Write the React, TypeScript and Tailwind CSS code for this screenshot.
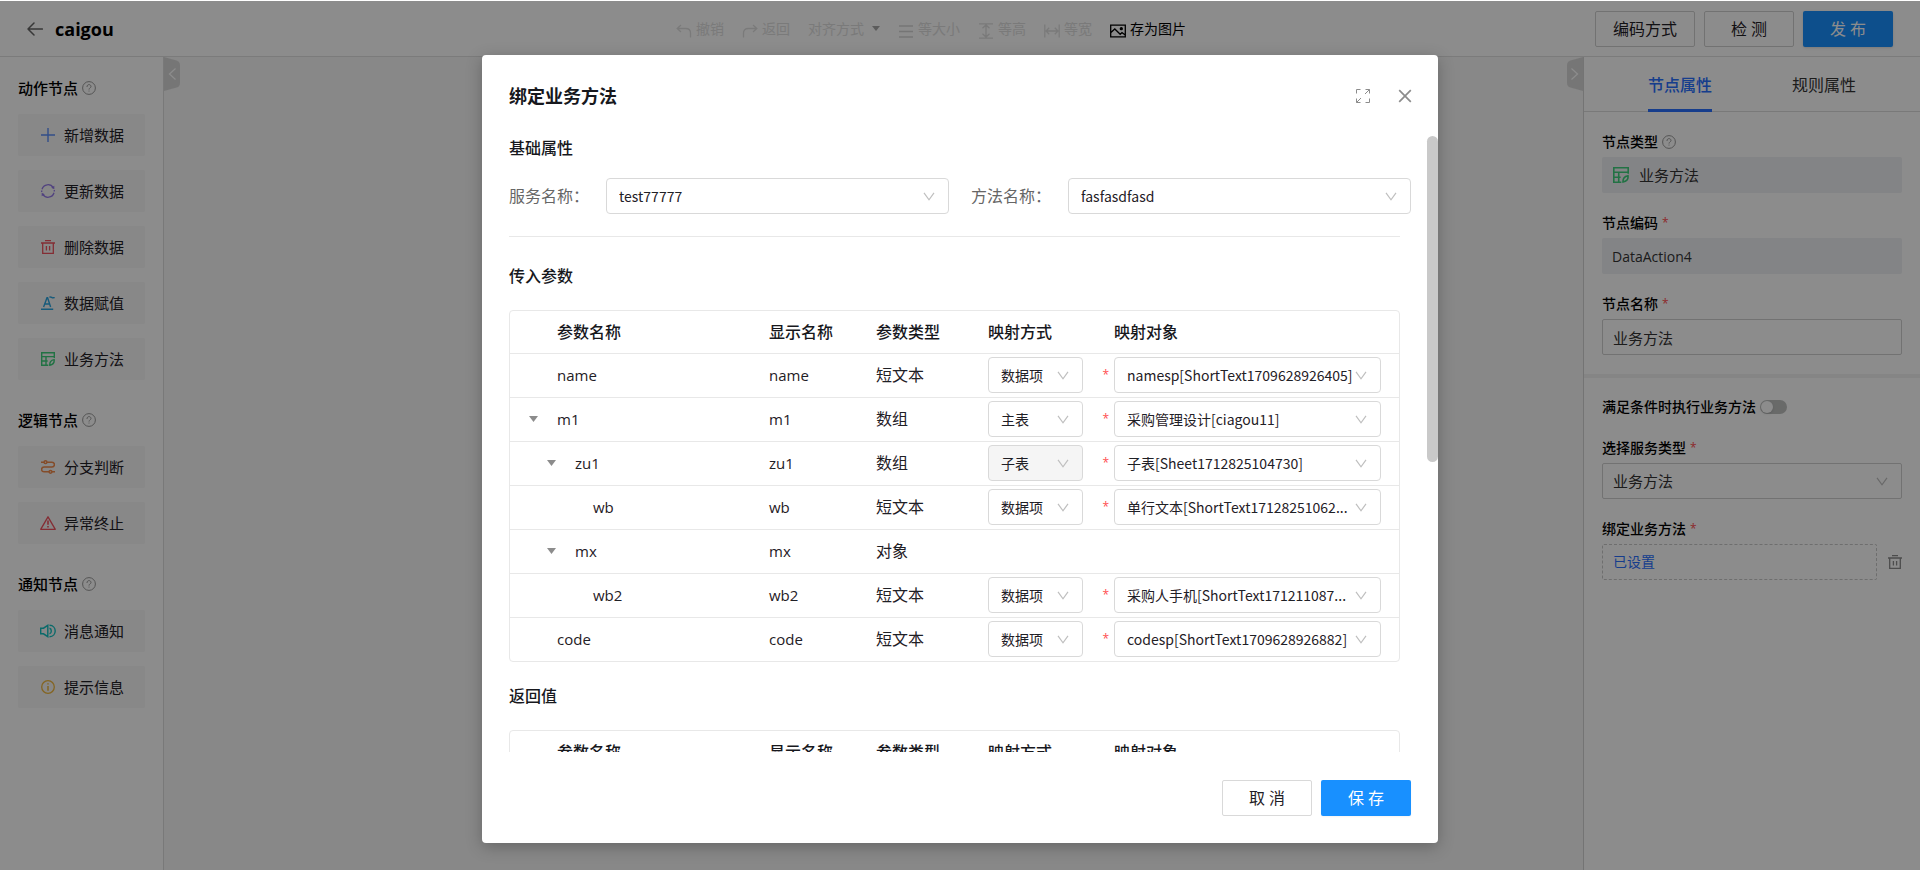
import { useId, useState, type ReactNode } from "react";

type IconProps = { className?: string };

function BackIcon({ className }: IconProps) {
  return (
    <svg viewBox="0 0 16 14" className={className} fill="none" stroke="currentColor" strokeWidth="1.5" strokeLinecap="round" strokeLinejoin="round">
      <path d="M7 1 1 7l6 6M1 7h14.4" />
    </svg>
  );
}

function HelpIcon({ className }: IconProps) {
  return (
    <svg viewBox="0 0 14 14" className={className} fill="none" stroke="currentColor">
      <circle cx="7" cy="7" r="6.4" />
      <path d="M5 5.6c0-1.200.9-2 2-2s2 .8 2 1.900c0 1.300-2 1.500-2 2.700" strokeLinecap="round" />
      <path d="M7 9.600v.9" />
    </svg>
  );
}

function PlusIcon() {
  return (
    <svg viewBox="0 0 14 14" className="size-3.5 text-[#5b8ff9]" stroke="currentColor" strokeWidth="1.4">
      <path d="M7 0v14M0 7h14" />
    </svg>
  );
}

function RefreshIcon() {
  return (
    <svg viewBox="0 0 14 14" className="size-3.5 text-[#9479e8]" fill="none" stroke="currentColor" strokeWidth="1.3">
      <path d="M1 5.200A6.200 6.200 0 0 1 12.300 3.800M13 8.800A6.200 6.200 0 0 1 1.700 10.200" />
      <path d="M13.300 1.800v3.400l-3-1.400zM.7 12.200V8.800l3 1.400z" fill="currentColor" stroke="none" />
      <path d="M13.300 6v1.400M.7 8V6.600" />
    </svg>
  );
}

function TrashIcon({ className }: IconProps) {
  return (
    <svg viewBox="0 0 14 14" className={className} fill="none" stroke="currentColor" strokeWidth="1.3">
      <path d="M4 .7h6M0 3h14M1.700 3v10.300h10.600V3M5.400 6v4.400M8.600 6v4.400" />
    </svg>
  );
}

function AssignIcon() {
  return (
    <svg viewBox="0 0 14 14" className="size-3.5 text-[#2aa5e0]" fill="none" stroke="currentColor" strokeWidth="1.400">
      <path d="M2.600 11 6 1.800h.6L9.600 11M3.800 8h4.800M0 13.300h12.200" />
      <path d="M8.400 1.400c1.300-1.500 2.600.8 3.600.4.700-.200 1-.4 1.700 0" />
    </svg>
  );
}

function MethodIcon({ className }: IconProps) {
  return (
    <svg viewBox="0 0 14 14" className={className} fill="none" stroke="currentColor" strokeWidth="1.400">
      <path d="M13.300 6V.7H.7v12.600h6.600M.7 4.600h12.600M.7 9h6M5 4.600v8.700" />
      <path d="M8.800 13.200c-.3-2.500.9-5.200 4.300-5.600.4 2.700-.9 4.900-4.300 5.600z" />
    </svg>
  );
}

function BranchIcon() {
  return (
    <svg viewBox="0 0 14 14" className="size-3.5 text-[#f08a4b]" fill="none" stroke="currentColor" strokeWidth="1.500">
      <path d="M0 2.200h3M6 2.200h5a2.400 2.400 0 0 1 0 4.800H3a2.400 2.400 0 0 0 0 4.800h5M11 11.800h3" />
      <circle cx="4.500" cy="2.200" r="1.400" />
      <circle cx="9.500" cy="11.800" r="1.400" />
    </svg>
  );
}

function WarnIcon() {
  return (
    <svg viewBox="0 0 16 14" className="h-3.5 w-4 text-[#f0525f]" fill="none" stroke="currentColor" strokeWidth="1.300" strokeLinejoin="round">
      <path d="M8 .8 15.300 13.300H.7z" />
      <path d="M8 4.500v4.300M8 10v1.600" strokeWidth="1.600" />
    </svg>
  );
}

function SpeakerIcon() {
  return (
    <svg viewBox="0 0 16 14" className="h-3.5 w-4 text-[#13c2c2]" fill="none" stroke="currentColor" strokeWidth="1.400">
      <path d="M.7 4.200h2.800L7.800 1.300v11.400L3.500 9.800H.7z" />
      <path d="M9.500 4.300c2.400.5 2.400 4.900 0 5.400M9.500 1.300c7.600.2 7.600 11.200 0 11.400" />
    </svg>
  );
}

function InfoIcon() {
  return (
    <svg viewBox="0 0 14 14" className="size-3.5 text-[#f0b73d]" fill="none" stroke="currentColor" strokeWidth="1.300">
      <circle cx="7" cy="7" r="6.300" />
      <path d="M7 3.200v1.400M7 6v4.800" strokeWidth="1.500" />
    </svg>
  );
}

function ChevronDown({ className }: IconProps) {
  return (
    <svg viewBox="0 0 12 9" className={`pointer-events-none absolute h-[9px] w-3 text-[#bfbfbf] ${className ?? ""}`} fill="none" stroke="currentColor" strokeWidth="1.200">
      <path d="M1 .8 6 7.800 11 .8" />
    </svg>
  );
}

function Required() {
  return <span className="text-xs text-[#ff4d4f]">*</span>;
}

type SelectProps = {
  id?: string;
  label?: string;
  value: string;
  disabled?: boolean;
  className?: string;
};

function Select({ id, label, value, disabled, className }: SelectProps) {
  return (
    <div className={`relative flex items-center ${className ?? ""}`}>
      <select
        id={id}
        aria-label={label}
        disabled={disabled}
        defaultValue={value}
        className="h-9 w-full appearance-none overflow-hidden rounded border border-[#d9d9d9] bg-white pr-5 pl-3 font-['Noto_Sans_CJK_SC',sans-serif] text-sm text-ellipsis whitespace-nowrap text-[#1f2026] disabled:bg-[#f5f5f5] disabled:opacity-100"
      >
        <option>{value}</option>
      </select>
      <ChevronDown className="right-3.5" />
    </div>
  );
}

const NODE_GROUPS: { title: string; nodes: { name: string; icon: ReactNode }[] }[] = [
  {
    title: "动作节点",
    nodes: [
      { name: "新增数据", icon: <PlusIcon /> },
      { name: "更新数据", icon: <RefreshIcon /> },
      { name: "删除数据", icon: <TrashIcon className="size-3.5 text-[#f0525f]" /> },
      { name: "数据赋值", icon: <AssignIcon /> },
      { name: "业务方法", icon: <MethodIcon className="size-3.5 text-[#3ecf7c]" /> },
    ],
  },
  {
    title: "逻辑节点",
    nodes: [
      { name: "分支判断", icon: <BranchIcon /> },
      { name: "异常终止", icon: <WarnIcon /> },
    ],
  },
  {
    title: "通知节点",
    nodes: [
      { name: "消息通知", icon: <SpeakerIcon /> },
      { name: "提示信息", icon: <InfoIcon /> },
    ],
  },
];

function ToolIcon({ d, className }: { d: string; className?: string }) {
  return (
    <svg viewBox="0 0 16 16" className={`mt-1 size-4 ${className ?? ""}`} fill="none" stroke="currentColor" strokeWidth="1.300">
      <path d={d} />
    </svg>
  );
}

function Header() {
  return (
    <header className="flex h-14 shrink-0 items-center border-b border-[#e0e0e0] bg-white px-[27px]">
      <div className="flex flex-1 items-center gap-3">
        <a href="#back" aria-label="返回" className="text-[#666]">
          <BackIcon className="h-3.5 w-4" />
        </a>
        <h1 className="text-lg leading-6 font-bold text-black">caigou</h1>
      </div>
      <div className="mr-[58px] flex items-center gap-[18px] text-sm text-[#dedede]">
        <button type="button" disabled className="flex items-center gap-1">
          <ToolIcon d="M5 2 1.200 5.500 5 9M1.200 5.500h8.600c3 0 4.700 1.700 4.700 4.500v4.500" />
          撤销
        </button>
        <button type="button" disabled className="flex items-center gap-1">
          <ToolIcon d="M11 2l3.800 3.500L11 9M14.800 5.500H6.200c-3 0-4.700 1.700-4.700 4.500v4.500" />
          返回
        </button>
        <button type="button" disabled className="flex items-center gap-2">
          对齐方式
          <svg viewBox="0 0 8 5" className="h-[5px] w-2 fill-[#a8a8a8]">
            <path d="M0 0h8L4 5z" />
          </svg>
        </button>
        <button type="button" disabled className="flex items-center gap-1">
          <ToolIcon className="text-[#d6d6d6]" d="M1 3h14M1 8.500h14M1 14h14" />
          等大小
        </button>
        <button type="button" disabled className="flex items-center gap-1">
          <ToolIcon d="M1 .8h14M1 15.200h14M8 2v12M4.500 5.200 8 2l3.500 3.200M4.500 10.800 8 14l3.500-3.200" />
          等高
        </button>
        <button type="button" disabled className="flex items-center gap-1">
          <ToolIcon d="M.8 1.500v13M15.200 1.500v13M2 8h12M5.200 4.800 2 8l3.200 3.200M10.800 4.800 14 8l-3.200 3.200" />
          等宽
        </button>
        <button type="button" className="flex items-center gap-1 text-black">
          <svg viewBox="0 0 16 16" className="mt-1 size-4" fill="none" stroke="currentColor" strokeWidth="1.300">
            <path d="M.7 2.200h14.600v11.600H.7zM.9 9.500 4.800 6l5.400 5.300 1.800-1.800 3.200 2.500" />
            <circle cx="11.300" cy="5.700" r="1" fill="currentColor" />
          </svg>
          存为图片
        </button>
      </div>
      <div className="flex flex-1 justify-end gap-[9px]">
        <button type="button" className="h-9 rounded-xs border border-[#d0d0d0] bg-white px-[17px] text-base text-[#1f2026]">
          编码方式
        </button>
        <button type="button" className="h-9 w-[90px] rounded-xs border border-[#d0d0d0] bg-white text-base text-[#1f2026]">
          检 测
        </button>
        <button type="button" className="h-9 w-[90px] rounded-xs bg-[#1890ff] text-base text-white shadow-sm">
          发 布
        </button>
      </div>
    </header>
  );
}

function Sidebar() {
  return (
    <aside className="w-[164px] shrink-0 border-r border-[#dcdcdc] bg-white px-[18px] pt-[19px]">
      <div className="flex flex-col gap-7">
        {NODE_GROUPS.map((group) => (
          <section key={group.title}>
            <h2 className="mb-3.5 flex items-center gap-1 text-[15px] leading-6 font-medium text-black">
              {group.title}
              <HelpIcon className="size-3.5 text-[#999]" />
            </h2>
            <ul className="flex flex-col gap-3.5">
              {group.nodes.map((node) => (
                <li key={node.name}>
                  <button
                    type="button"
                    className="flex h-[42px] w-full items-center gap-2 rounded-xs bg-[#f7f7f7] pl-[22px] text-[15px] text-[#1f2026]"
                  >
                    <span className="flex w-4 justify-center">{node.icon}</span>
                    {node.name}
                  </button>
                </li>
              ))}
            </ul>
          </section>
        ))}
      </div>
    </aside>
  );
}

function CollapseHandle({ side }: { side: "left" | "right" }) {
  return (
    <button type="button" aria-label={side === "left" ? "收起左侧" : "收起右侧"} className="h-[34px] w-4">
      <svg viewBox="0 0 16 34" className={side === "left" ? "size-full" : "size-full -scale-x-100"}>
        <path d="M0 0l12.500 3.400Q16 4.500 16 8v18q0 3.500-3.500 4.600L0 34z" fill="#d8d8d8" />
        <path d="M11.500 11.500 5.500 17l6 5.500" fill="none" stroke="#fff" strokeWidth="1.200" />
      </svg>
    </button>
  );
}

function FieldLabel({ id, children }: { id?: string; children: ReactNode }) {
  return (
    <label htmlFor={id} className="mb-1 flex items-center gap-1 text-sm leading-[22px] font-medium text-black">
      {children}
    </label>
  );
}

function PropertyPanel() {
  const codeId = useId();
  const nameId = useId();
  const serviceId = useId();
  const switchId = useId();

  return (
    <aside className="w-[337px] shrink-0 border-l border-[#d4d4d4] bg-white">
      <div role="tablist" className="flex h-[55px] border-b border-[#dcdcdc] px-6 text-base">
        <button type="button" role="tab" aria-selected="true" className="flex flex-1 justify-center">
          <span className="h-[55px] border-b-3 border-[#2970ff] leading-[56px] font-medium text-[#2970ff]">节点属性</span>
        </button>
        <button type="button" role="tab" aria-selected="false" className="flex flex-1 justify-center leading-[56px] text-[#333]">
          规则属性
        </button>
      </div>

      <div className="flex flex-col gap-[19px] px-[18px] py-[19px]">
        <div>
          <div className="mb-1 flex items-center gap-1 text-sm leading-[22px] font-medium text-black">
            节点类型
            <HelpIcon className="size-3.5 text-[#999]" />
          </div>
          <div className="flex h-9 items-center gap-2.5 rounded-xs bg-[#eff1f4] px-[11px] text-[15px] text-[#333]">
            <MethodIcon className="size-4 text-[#3ecf7c]" />
            业务方法
          </div>
        </div>
        <div>
          <FieldLabel id={codeId}>
            节点编码 <Required />
          </FieldLabel>
          <input id={codeId} readOnly defaultValue="DataAction4" className="h-9 w-full rounded-xs bg-[#eff1f4] px-[10px] text-sm text-[#333]" />
        </div>
        <div>
          <FieldLabel id={nameId}>
            节点名称 <Required />
          </FieldLabel>
          <input id={nameId} defaultValue="业务方法" className="h-9 w-full rounded-xs border border-[#d0d0d0] bg-white px-[10px] text-[15px] text-[#333]" />
        </div>
      </div>

      <div className="h-1 bg-[#f2f2f2]" />

      <div className="flex flex-col gap-[19px] px-[18px] py-[18px]">
        <div className="flex items-center gap-1">
          <label htmlFor={switchId} className="text-sm leading-[22px] font-medium text-black">
            满足条件时执行业务方法
          </label>
          <input
            id={switchId}
            type="checkbox"
            role="switch"
            className="h-3.5 w-[27px] appearance-none rounded-full bg-[#bfc1c0] p-px before:block before:size-3 before:rounded-full before:bg-white before:shadow"
          />
        </div>
        <div>
          <FieldLabel id={serviceId}>
            选择服务类型 <Required />
          </FieldLabel>
          <div className="relative flex items-center">
            <select id={serviceId} defaultValue="业务方法" className="h-9 w-full appearance-none rounded-xs border border-[#d0d0d0] bg-white px-[10px] text-[15px] text-[#333]">
              <option>业务方法</option>
            </select>
            <ChevronDown className="right-3.5" />
          </div>
        </div>
        <div>
          <div className="mb-1 flex items-center gap-1 text-sm leading-[22px] font-medium text-black">
            绑定业务方法 <Required />
          </div>
          <div className="flex items-center gap-[11px]">
            <a href="#bind" className="h-9 flex-1 rounded-xs border border-dashed border-[#c8c8c8] px-[10px] text-sm leading-[34px] text-[#2970ff]">
              已设置
            </a>
            <button type="button" aria-label="删除">
              <TrashIcon className="size-3.5 text-[#8c8c8c]" />
            </button>
          </div>
        </div>
      </div>
    </aside>
  );
}

type Param = { name: string; level: number; type: string; mode?: string; target?: string; locked?: boolean; parent?: boolean };

const PARAMS: Param[] = [
  { name: "name", level: 0, type: "短文本", mode: "数据项", target: "namesp[ShortText1709628926405]" },
  { name: "m1", level: 0, type: "数组", mode: "主表", target: "采购管理设计[ciagou11]", parent: true },
  { name: "zu1", level: 1, type: "数组", mode: "子表", target: "子表[Sheet1712825104730]", locked: true, parent: true },
  { name: "wb", level: 2, type: "短文本", mode: "数据项", target: "单行文本[ShortText17128251062..." },
  { name: "mx", level: 1, type: "对象", parent: true },
  { name: "wb2", level: 2, type: "短文本", mode: "数据项", target: "采购人手机[ShortText171211087..." },
  { name: "code", level: 0, type: "短文本", mode: "数据项", target: "codesp[ShortText1709628926882]" },
];

const INDENT = ["pl-0", "pl-[18px]", "pl-9"];

function ParamTable({ rows }: { rows: Param[] }) {
  return (
    <div className="mr-[11px] rounded border border-[#e8e8e8]">
      <table className="w-full table-fixed text-left text-base text-[#1f2026]">
        <colgroup>
          <col className="w-[259px]" />
          <col className="w-[107px]" />
          <col className="w-[112px]" />
          <col className="w-[126px]" />
          <col />
        </colgroup>
        <thead>
          <tr className="h-[42px] text-[#17181d]">
            <th className="pl-[47px] font-medium">参数名称</th>
            <th className="font-medium">显示名称</th>
            <th className="font-medium">参数类型</th>
            <th className="font-medium">映射方式</th>
            <th className="font-medium">映射对象</th>
          </tr>
        </thead>
        <tbody>
          {rows.map((row) => (
            <tr key={row.name} className="h-11 border-t border-[#e8e8e8]">
              <td>
                <div className={`flex items-center text-[15px] ${INDENT[row.level]}`}>
                  <span className="flex w-[47px] items-center pl-[19px]">
                    {row.parent && (
                      <button type="button" aria-label="折叠">
                        <svg viewBox="0 0 9 6" className="h-1.5 w-[9px] fill-[#8c8c8c]">
                          <path d="M0 0h9L4.500 6z" />
                        </svg>
                      </button>
                    )}
                  </span>
                  {row.name}
                </div>
              </td>
              <td className="text-[15px]">{row.name}</td>
              <td>{row.type}</td>
              <td>
                {row.mode && (
                  <div className="flex items-center justify-between pr-[5px]">
                    <Select label={`${row.name} 映射方式`} value={row.mode} disabled={row.locked} className="w-[95px]" />
                    <Required />
                  </div>
                )}
              </td>
              <td>{row.target && <Select label={`${row.name} 映射对象`} value={row.target} className="mr-[18px]" />}</td>
            </tr>
          ))}
        </tbody>
      </table>
    </div>
  );
}

function BindMethodDialog({ onClose }: { onClose: () => void }) {
  const serviceId = useId();
  const methodId = useId();

  return (
    <div role="dialog" aria-modal="true" aria-label="绑定业务方法" className="flex h-full w-[956px] max-w-full flex-col rounded bg-white shadow-[0_4px_16px_rgba(0,0,0,0.25)]">
      <div className="flex h-[81px] shrink-0 items-center justify-between pr-[26px] pl-[27px]">
        <h2 className="text-lg font-bold text-[#17181d]">绑定业务方法</h2>
        <div className="flex items-center gap-7 text-[#8c8c8c]">
          <button type="button" aria-label="全屏">
            <svg viewBox="0 0 14 14" className="size-3.5" fill="none" stroke="currentColor">
              <path d="M.5 4.500v-4h4M13.500 9.500v4h-4M9.500.5h4v4M4.500 13.500h-4v-4M13.500.5 9 5M.5 13.500 5 9" />
            </svg>
          </button>
          <button type="button" aria-label="关闭" onClick={onClose}>
            <svg viewBox="0 0 14 14" className="size-3.5" fill="none" stroke="currentColor" strokeWidth="1.700">
              <path d="M1.200 1.200l11.600 11.600M12.800 1.200 1.200 12.800" />
            </svg>
          </button>
        </div>
      </div>

      <div className="flex min-h-0 flex-1">
        <div className="flex-1 overflow-hidden pr-4 pl-[27px]">
          <h3 className="text-base leading-6 font-medium text-[#17181d]">基础属性</h3>
          <div className="mt-[18px] flex gap-[22px]">
            <div className="flex flex-1 items-center">
              <label htmlFor={serviceId} className="w-[97px] text-base text-[#666]">
                服务名称：
              </label>
              <Select id={serviceId} value="test77777" className="flex-1" />
            </div>
            <div className="flex flex-1 items-center">
              <label htmlFor={methodId} className="w-[97px] text-base text-[#666]">
                方法名称：
              </label>
              <Select id={methodId} value="fasfasdfasd" className="flex-1" />
            </div>
          </div>
          <hr className="mt-[22px] mr-[11px] border-[#e8e8e8]" />
          <h3 className="mt-[27px] mb-[22px] text-base leading-6 font-medium text-[#17181d]">传入参数</h3>
          <ParamTable rows={PARAMS} />
          <h3 className="my-[22px] text-base leading-6 font-medium text-[#17181d]">返回值</h3>
          <ParamTable rows={[]} />
        </div>
        <div className="w-[11px]">
          <div className="h-[53%] rounded-full bg-[#c9c9c9]" />
        </div>
      </div>

      <div className="flex shrink-0 justify-end gap-[9px] px-[27px] pt-7 pb-[27px]">
        <button type="button" onClick={onClose} className="h-9 w-[90px] rounded-xs border border-[#d9d9d9] bg-white text-base text-[#1f2026]">
          取 消
        </button>
        <button type="button" className="h-9 w-[90px] rounded-xs bg-[#1890ff] text-base text-white shadow-xs">
          保 存
        </button>
      </div>
    </div>
  );
}

export default function App() {
  const [open, setOpen] = useState(true);

  return (
    <div className="relative flex h-screen flex-col overflow-hidden bg-white pt-px font-['Open_Sans','Noto_Sans_CJK_SC',sans-serif]">
      <Header />
      <div className="flex min-h-0 flex-1">
        <Sidebar />
        <main className="flex flex-1 items-start justify-between bg-[#f7f7f7]">
          <CollapseHandle side="left" />
          <CollapseHandle side="right" />
        </main>
        <PropertyPanel />
      </div>

      {open && (
        <div className="absolute inset-x-0 top-px bottom-0 flex justify-center bg-black/45 pt-[54px] pb-[27px]">
          <BindMethodDialog onClose={() => setOpen(false)} />
        </div>
      )}
    </div>
  );
}
